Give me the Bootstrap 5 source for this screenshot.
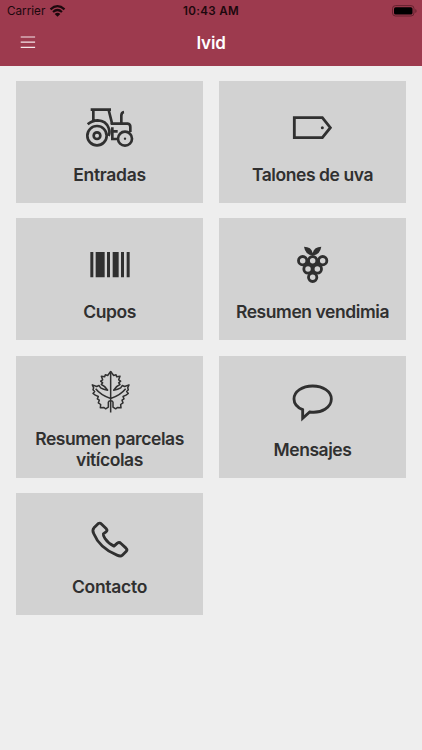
<!DOCTYPE html>
<html lang="es">
<head>
<meta charset="utf-8">
<meta name="viewport" content="width=device-width, initial-scale=1">
<title>Ivid</title>
<link href="https://cdn.jsdelivr.net/npm/bootstrap@5.3.0/dist/css/bootstrap.min.css" rel="stylesheet">
<style>
body{background:#eee;color:#303030;font-family:Inter,"Liberation Sans",sans-serif;min-height:750px;overflow:hidden}
.app-head{background:#9d3a4e;height:65.5px}
.status{height:22px;color:#1c080d;font-size:11.7px;line-height:22px}
.status .grow{flex:1 1 0}
.carrier{margin-left:7px}
.clock{font-weight:600;font-size:11.6px;letter-spacing:.32px}
.title-bar{height:42px;color:#fff}
.title-bar .grow{flex:1 1 0}
.app-title{font-size:17px;font-weight:600;line-height:42px;letter-spacing:-.2px}
.tiles{padding:15.3px 15.6px;gap:15.4px 15.2px;display:grid;grid-template-columns:1fr 1fr;grid-auto-rows:122px}
.tile{background:#d2d2d2;color:#303030;padding:6.5px 10px 0;gap:16px;font-size:17.5px;line-height:20.5px;font-weight:600;letter-spacing:-.43px}
.tile.first-word{letter-spacing:-.3px}
.tile svg{width:60px;height:44px;overflow:visible;flex:none;fill:none;stroke:#303030;stroke-width:8.5}
</style>
<script src="https://cdn.jsdelivr.net/npm/bootstrap@5.3.0/dist/js/bootstrap.bundle.min.js"></script>
</head>
<body>
<header class="app-head">
  <div class="status d-flex">
    <div class="grow d-flex align-items-center">
      <span class="carrier">Carrier</span>
      <svg class="ms-1" width="17" height="12" viewBox="0 0 48 36" fill="none" stroke="#1c080d" stroke-width="6.5"><path d="M3 13Q24-6 45 13M10.500 21Q24 9 37.500 21"/><path d="M15.500 27Q24 19 32.500 27L24 35Z" fill="#1c080d" stroke="none"/></svg>
    </div>
    <span class="clock">10:43 AM</span>
    <div class="grow d-flex align-items-center justify-content-end">
      <svg width="26" height="12" viewBox="0 0 26 12"><rect x=".5" y=".6" width="21.500" height="10.400" rx="3" fill="none" stroke="#65222f"/><rect x="2" y="2.200" width="18.500" height="7.300" rx="1.600" fill="#000"/><path d="M23.300 4v4q1.300-.7 1.300-2t-1.300-2" fill="#65222f"/></svg>
      <span class="pe-1"></span>
    </div>
  </div>
  <nav class="title-bar d-flex align-items-center" aria-label="Principal">
    <div class="grow"><svg class="d-block ms-3" width="24" height="14" viewBox="0 0 24 14" stroke="#f6e5e9" stroke-width="1.200"><path d="M4.700 1h14.400M4.700 6.100h14.400M4.700 11.300h14.400"/></svg></div>
    <span class="app-title">Ivid</span>
    <div class="grow"></div>
  </nav>
</header>
<main class="tiles">
  <a class="tile first-word d-flex flex-column align-items-center justify-content-center text-center text-decoration-none" href="#">
    <svg viewBox="-2 15 180 132"><g stroke-width="8"><path d="M30 29H91M38 30V61M84 30L93 66V72M21 73Q35 61 51 61Q76 62 84 84Q89 96 84 108M90 71H141Q149 72 149 81V96M95 82V117H110M122 69V47Q122 37 130 36M96 94H111"/><circle cx="49" cy="107" r="29"/><circle cx="49" cy="107" r="10"/><circle cx="133" cy="116" r="21"/></g><circle cx="133" cy="116" r="3.500" fill="#303030" stroke="none"/></svg>
    <span>Entradas</span></a>
  <a class="tile d-flex flex-column align-items-center justify-content-center text-center text-decoration-none" href="#">
    <svg viewBox="2 15 180 132"><path d="M36 53H120L144 83L120 113H36Z"/><circle cx="120" cy="83" r="4.500" fill="#303030" stroke="none"/></svg>
    <span>Talones de uva</span></a>
  <a class="tile d-flex flex-column align-items-center justify-content-center text-center text-decoration-none" href="#">
    <svg viewBox="-2 7 180 132"><path fill="#303030" stroke="none" d="M29 37h9v76h-9zM45 37h27v76H45zM79 37h9v76h-9zM96 37h18v76H96zM121 37h9v76h-9zM138 37h9v76h-9z"/></svg>
    <span>Cupos</span></a>
  <a class="tile d-flex flex-column align-items-center justify-content-center text-center text-decoration-none" href="#">
    <svg viewBox="2 7 180 132"><path fill="#303030" stroke="none" d="M91 47Q69 46 65 21Q87 21 91 40Q96 21 117 21Q113 46 91 47ZM60 63H122L91 114Z"/><g fill="#d2d2d2" stroke-width="8.500"><circle cx="61" cy="63" r="12.500"/><circle cx="91" cy="63" r="12.500"/><circle cx="121" cy="63" r="12.500"/><circle cx="77" cy="88" r="12.500"/><circle cx="105" cy="88" r="12.500"/><circle cx="91" cy="113" r="12.500"/></g></svg>
    <span>Resumen vendimia</span></a>
  <a class="tile d-flex flex-column align-items-center justify-content-center text-center text-decoration-none" href="#">
    <svg viewBox="-2 22.500 180 132"><g stroke-width="4.500" stroke-linejoin="round"><path d="M90 153V30M90 84V60M90 111Q61 102 45 82M90 111Q119 102 135 82"/><path d="M90 30L81 42L74 40L72 46L62 44L66 55L60 59L66 64L62 69Q74 74 81 86Q68 84 60 79L55 72L48 75L35 70L39 79L37 85L42 90L37 96L44 101L53 105L50 112L56 116L53 124L60 129L59 139L70 138L75 142L83 137V122Q84 118 90 118Q96 118 97 122V137L105 142L110 138L121 139L120 129L127 124L124 116L130 112L127 105L136 101L143 96L138 90L143 85L141 79L145 70L132 75L125 72L120 79Q112 84 99 86Q106 74 118 69L114 64L120 59L114 55L118 44L108 46L106 40L99 42Z"/></g></svg>
    <span>Resumen parcelas vitícolas</span></a>
  <a class="tile d-flex flex-column align-items-center justify-content-center text-center text-decoration-none" href="#">
    <svg viewBox="2 23 180 132"><path d="M61 138V112C44 105 35 94 35 80C35 57 60 41 91 41C122 41 147 57 147 80C147 105 118 124 82 119Z"/></svg>
    <span>Mensajes</span></a>
  <a class="tile first-word d-flex flex-column align-items-center justify-content-center text-center text-decoration-none" href="#">
    <svg viewBox="-2 21.600 180 132"><path stroke-linejoin="round" d="M53 41Q58 38 63 43L77 57Q81 62 76 66L68 72Q67 77 73 86Q82 100 100 109L110 100Q116 96 121 101L136 115Q141 120 137 124L125 136Q120 141 109 136Q57 115 39 71Q34 61 40 54Z"/></svg>
    <span>Contacto</span></a>
</main>
</body>
</html>
